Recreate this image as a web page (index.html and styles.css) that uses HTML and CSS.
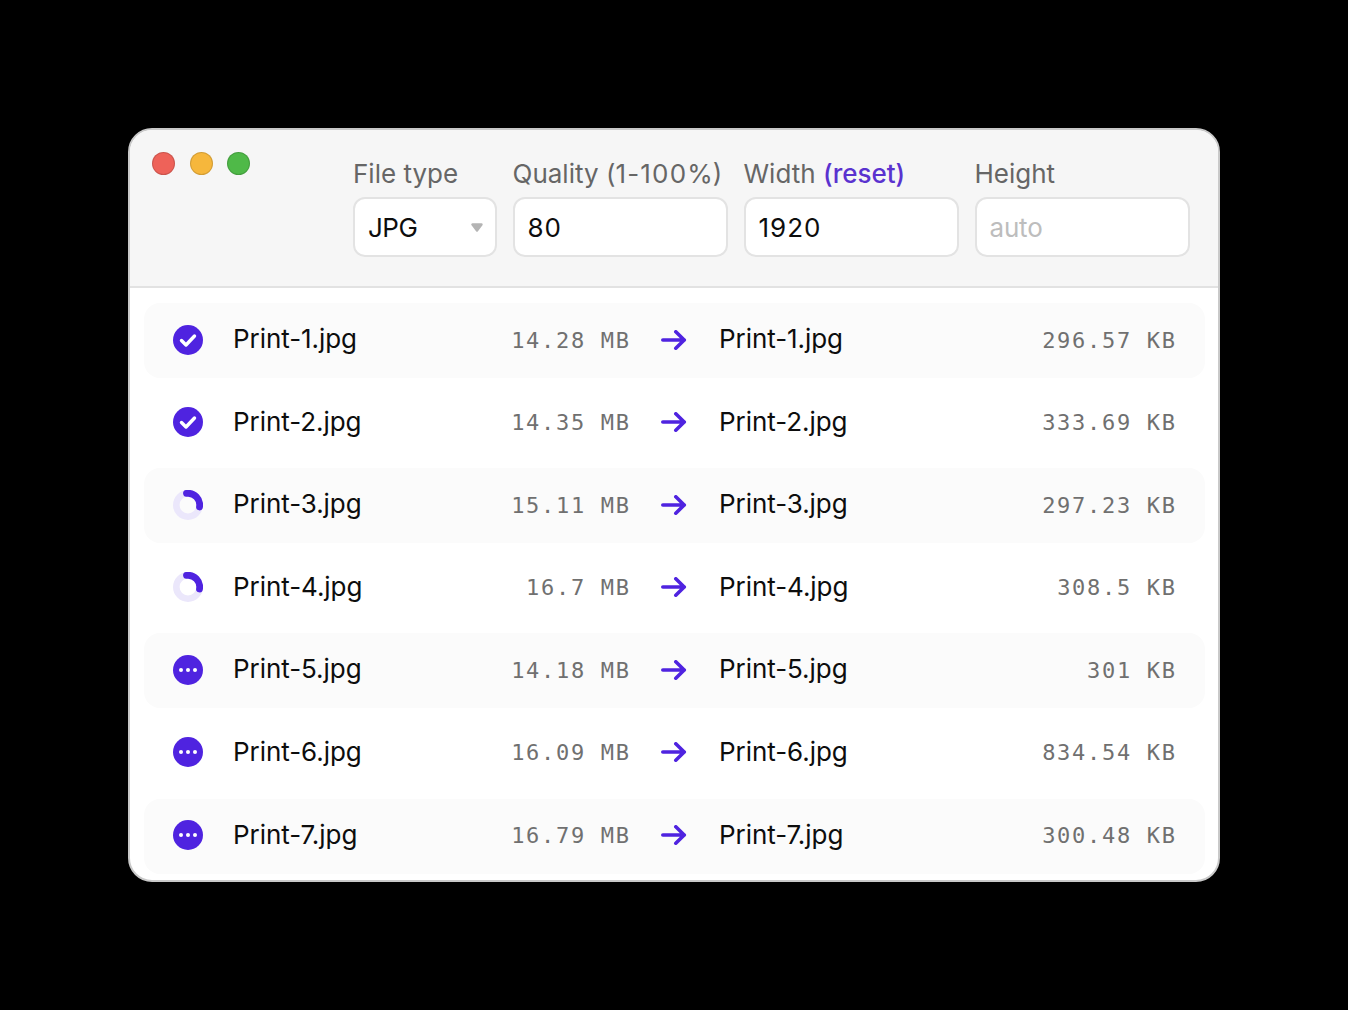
FILE: index.html
```html
<!DOCTYPE html>
<html lang="en">
<head>
<meta charset="utf-8">
<title>Image converter</title>
<link rel="stylesheet" href="styles.css">
</head>
<body>
<svg class="defs" width="0" height="0" aria-hidden="true">
  <defs>
    <symbol id="done" viewBox="0 0 30 30">
      <circle cx="15" cy="15" r="15" fill="#4f23e0"/>
      <path d="M8.5 15.5l4.5 4.5 8.5-9" fill="none" stroke="#fff" stroke-width="3.4" stroke-linecap="round" stroke-linejoin="round"/>
    </symbol>
    <symbol id="busy" viewBox="0 0 30 30">
      <circle cx="15" cy="15" r="11.7" fill="none" stroke="#ebe7fb" stroke-width="6.6"/>
      <path d="M13.5 3.4A11.7 11.7 0 0 1 26.5 17" fill="none" stroke="#4f23e0" stroke-width="6.8" stroke-linecap="round"/>
    </symbol>
    <symbol id="wait" viewBox="0 0 30 30">
      <circle cx="15" cy="15" r="15" fill="#4f23e0"/>
      <circle cx="8" cy="15" r="2" fill="#fff"/>
      <circle cx="15" cy="15" r="2" fill="#fff"/>
      <circle cx="22" cy="15" r="2" fill="#fff"/>
    </symbol>
    <symbol id="arrow" viewBox="0 0 26 20">
      <path d="M1.8 10h21.6M14.8 1.8l8.4 8.2-8.4 8.2" fill="none" stroke="#4f23e0" stroke-width="3.6" stroke-linecap="round" stroke-linejoin="round"/>
    </symbol>
  </defs>
</svg>
<main class="window">
  <header class="toolbar">
    <div class="lights">
      <span class="light red"></span>
      <span class="light yellow"></span>
      <span class="light green"></span>
    </div>
    <div class="fields">
      <div class="field type">
        <span class="label">File type</span>
        <div class="control select">
          <span class="select-value">JPG</span>
          <svg class="caret" width="12" height="9" viewBox="0 0 12 9"><path d="M1.5 1.5h9L6 7.5z" fill="#b4b4b4" stroke="#b4b4b4" stroke-width="2.4" stroke-linejoin="round"/></svg>
        </div>
      </div>
      <div class="field">
        <span class="label">Quality (<span class="digits">1-100</span>%)</span>
        <input class="control" type="text" value="80">
      </div>
      <div class="field">
        <span class="label">Width <a class="reset">(reset)</a></span>
        <input class="control" type="text" value="1920">
      </div>
      <div class="field">
        <span class="label">Height</span>
        <input class="control" type="text" placeholder="auto">
      </div>
    </div>
  </header>
  <section class="list">
    <div class="row">
      <svg class="status"><use href="#done"/></svg>
      <div class="file"><span class="name">Print-1.jpg</span><span class="size">14.28 MB</span></div>
      <svg class="arrow"><use href="#arrow"/></svg>
      <div class="file"><span class="name">Print-1.jpg</span><span class="size">296.57 KB</span></div>
    </div>
    <div class="row">
      <svg class="status"><use href="#done"/></svg>
      <div class="file"><span class="name">Print-2.jpg</span><span class="size">14.35 MB</span></div>
      <svg class="arrow"><use href="#arrow"/></svg>
      <div class="file"><span class="name">Print-2.jpg</span><span class="size">333.69 KB</span></div>
    </div>
    <div class="row">
      <svg class="status"><use href="#busy"/></svg>
      <div class="file"><span class="name">Print-3.jpg</span><span class="size">15.11 MB</span></div>
      <svg class="arrow"><use href="#arrow"/></svg>
      <div class="file"><span class="name">Print-3.jpg</span><span class="size">297.23 KB</span></div>
    </div>
    <div class="row">
      <svg class="status"><use href="#busy"/></svg>
      <div class="file"><span class="name">Print-4.jpg</span><span class="size">16.7 MB</span></div>
      <svg class="arrow"><use href="#arrow"/></svg>
      <div class="file"><span class="name">Print-4.jpg</span><span class="size">308.5 KB</span></div>
    </div>
    <div class="row">
      <svg class="status"><use href="#wait"/></svg>
      <div class="file"><span class="name">Print-5.jpg</span><span class="size">14.18 MB</span></div>
      <svg class="arrow"><use href="#arrow"/></svg>
      <div class="file"><span class="name">Print-5.jpg</span><span class="size">301 KB</span></div>
    </div>
    <div class="row">
      <svg class="status"><use href="#wait"/></svg>
      <div class="file"><span class="name">Print-6.jpg</span><span class="size">16.09 MB</span></div>
      <svg class="arrow"><use href="#arrow"/></svg>
      <div class="file"><span class="name">Print-6.jpg</span><span class="size">834.54 KB</span></div>
    </div>
    <div class="row">
      <svg class="status"><use href="#wait"/></svg>
      <div class="file"><span class="name">Print-7.jpg</span><span class="size">16.79 MB</span></div>
      <svg class="arrow"><use href="#arrow"/></svg>
      <div class="file"><span class="name">Print-7.jpg</span><span class="size">300.48 KB</span></div>
    </div>
  </section>
</main>
</body>
</html>
```
FILE: styles.css
```css
* { box-sizing: border-box; }

html, body { height: 100%; }

body {
  margin: 0;
  background: #000;
  display: flex;
  align-items: center;
  justify-content: center;
  font-family: Inter, "Noto Sans", sans-serif;
  font-size: 26px;
  color: #0d0d0d;
}

.defs { position: absolute; }

.window {
  width: 1092px;
  height: 754px;
  background: #fff;
  border: 2px solid #c9c9c9;
  border-radius: 24px;
  overflow: hidden;
}

.toolbar {
  height: 158px;
  background: #f6f6f6;
  border-bottom: 2px solid #e2e2e2;
  display: flex;
  justify-content: space-between;
  padding: 22px 28px 0 22px;
}

.lights {
  display: flex;
  gap: 14.5px;
}

.light {
  width: 23px;
  height: 23px;
  border-radius: 50%;
  border: 1px solid rgba(0, 0, 0, 0.14);
}

.red { background: #ee6259; }
.yellow { background: #f6b73c; }
.green { background: #4fb948; }

.fields {
  display: flex;
  gap: 15.5px;
  padding-top: 6px;
}

.field {
  width: 215.5px;
  display: flex;
  flex-direction: column;
  gap: 7px;
}

.field.type { width: 144px; }

.label {
  height: 32px;
  line-height: 32px;
  color: #666;
  font-weight: 400;
  white-space: nowrap;
}

.digits { letter-spacing: 1.2px; }

.reset {
  color: #5a32cf;
  font-weight: 500;
}

.control {
  width: 100%;
  height: 60px;
  background: #fff;
  border: 2px solid #e3e3e3;
  border-radius: 12px;
  padding: 0 13px;
  font: inherit;
  letter-spacing: 1px;
  color: #0d0d0d;
  outline: none;
}

.control::placeholder {
  color: #bdbdbd;
  opacity: 1;
  letter-spacing: -0.2px;
}

.select {
  display: flex;
  align-items: center;
  justify-content: space-between;
  padding-right: 12px;
}

.select-value { letter-spacing: -0.5px; }

.list {
  display: flex;
  flex-direction: column;
  gap: 7.6px;
  padding: 15px 13px 6px 14px;
}

.row {
  height: 75px;
  flex: none;
  display: flex;
  align-items: center;
  padding: 0 30px 2px 29px;
  border-radius: 16px;
}

.row:nth-child(odd) { background: #fbfbfb; }

.status {
  width: 30px;
  height: 30px;
  flex: none;
  margin-right: 30px;
}

.arrow {
  width: 26px;
  height: 20px;
  flex: none;
  margin: 0 32px;
}

.file {
  flex: 396 1 0;
  display: flex;
  align-items: center;
  justify-content: space-between;
}

.file:last-child { flex-grow: 456; }

.name {
  padding-bottom: 2px;
  letter-spacing: -0.06px;
}

.size {
  padding-top: 1px;
  font-family: "DejaVu Sans Mono", "Liberation Mono", monospace;
  font-size: 22px;
  letter-spacing: 1.7px;
  margin-right: -1.7px;
  color: #707070;
}
```
